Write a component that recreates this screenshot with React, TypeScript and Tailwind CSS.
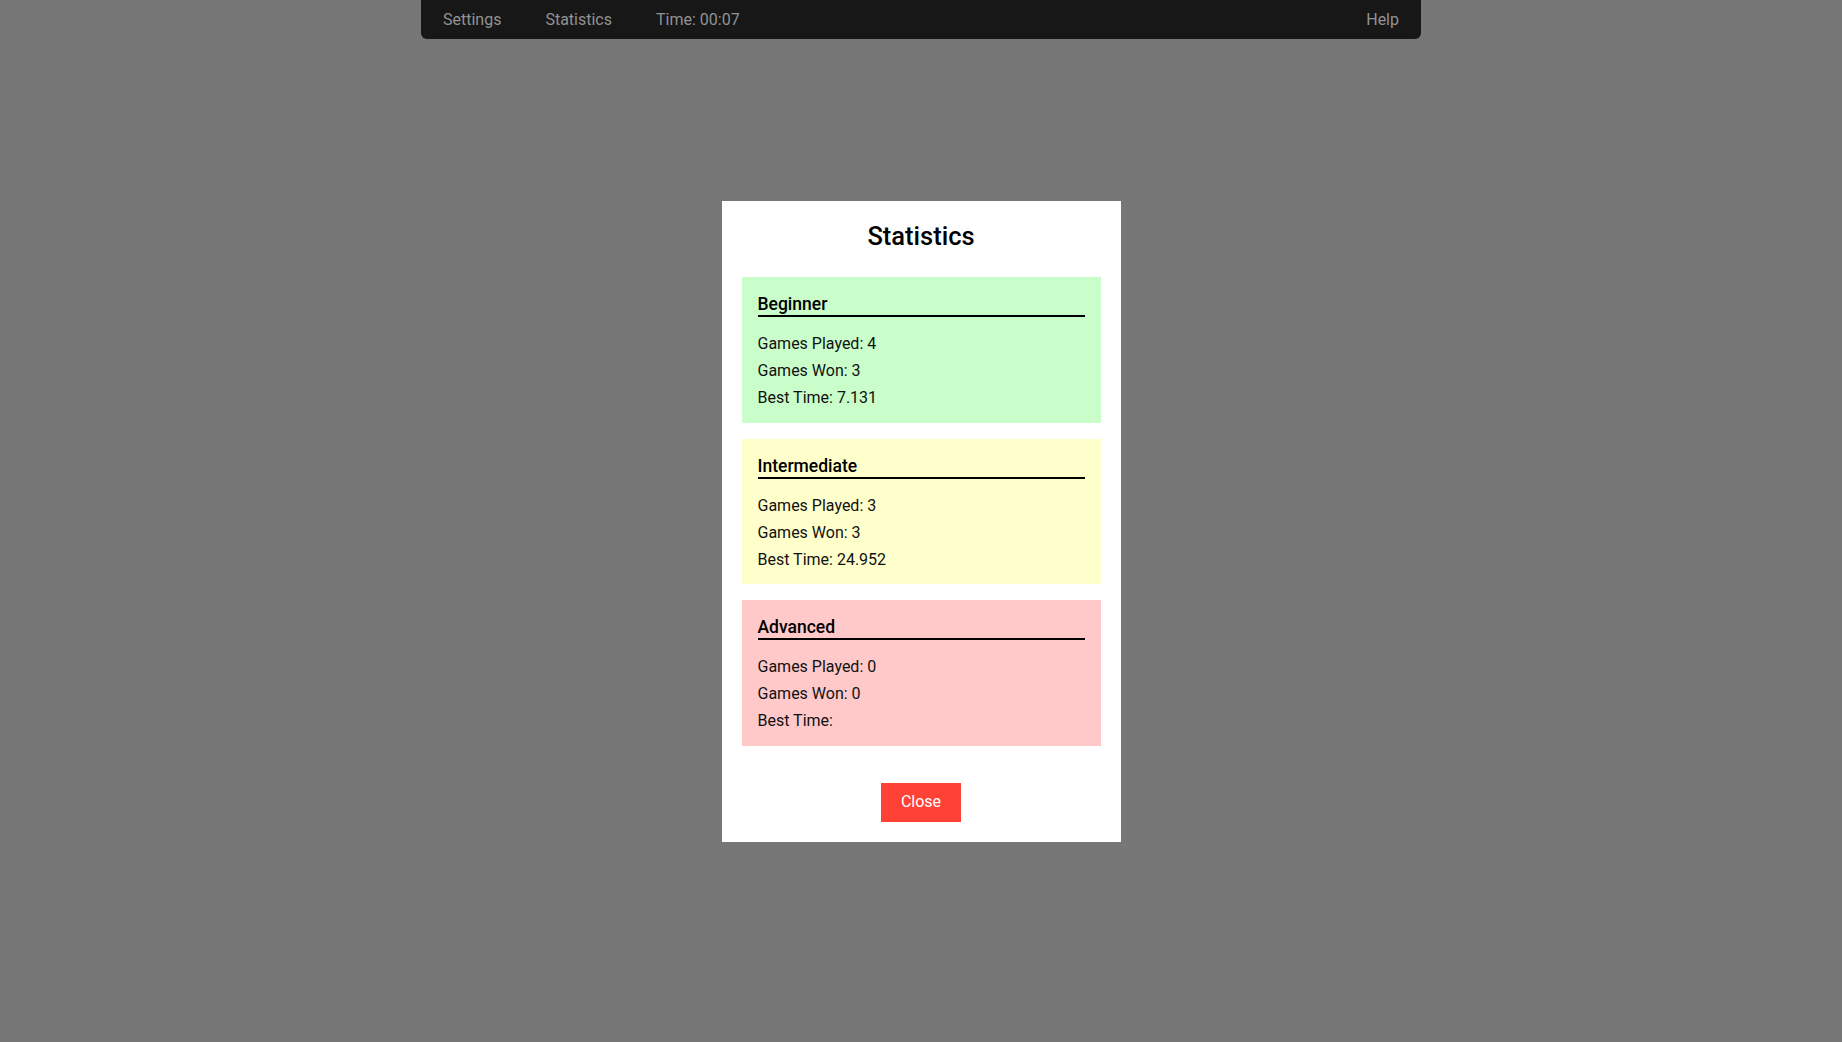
import React from "react";

type LevelStats = {
  name: string;
  played: number;
  won: number;
  best: string;
  bg: string;
};

const levels: LevelStats[] = [
  { name: "Beginner", played: 4, won: 3, best: "7.131", bg: "bg-[#c9fdc9]" },
  { name: "Intermediate", played: 3, won: 3, best: "24.952", bg: "bg-[#ffffcb]" },
  { name: "Advanced", played: 0, won: 0, best: "", bg: "bg-[#ffc9c9]" },
];

export default function App() {
  return (
    <div className="min-h-screen bg-[#777777] font-['Roboto',sans-serif] relative">
      {/* top nav */}
      <nav className="mx-auto w-[1000px] h-[39px] pt-[1px] bg-[#171717] rounded-b-[6px] flex items-center text-[16px] text-[#929292]">
        <span className="px-[22px]">Settings</span>
        <span className="px-[22px]">Statistics</span>
        <span className="px-[22px]">Time: 00:07</span>
        <span className="ml-auto px-[22px]">Help</span>
      </nav>

      {/* statistics modal */}
      <div className="flex justify-center pt-[162px]">
        <div className="w-[399px] bg-white px-5 pt-[19px] pb-5 flex flex-col">
          <h2 className="text-center text-[25.5px] leading-[32px] font-medium text-black">
            Statistics
          </h2>
          <div className="mt-[25px] flex flex-col gap-4">
            {levels.map((lvl) => (
              <div key={lvl.name} className={`${lvl.bg} px-4 pt-4 pb-[11.6px]`}>
                <h3 className="text-[17.5px] leading-[22px] font-medium text-black border-b-2 border-black">
                  {lvl.name}
                </h3>
                <div className="mt-[13px] text-[16px] leading-[27px] text-[#111111]">
                  <p>Games Played: {lvl.played}</p>
                  <p>Games Won: {lvl.won}</p>
                  <p>Best Time: {lvl.best}</p>
                </div>
              </div>
            ))}
          </div>
          <div className="flex justify-center mt-[37px]">
            <button className="w-[80px] h-[39px] bg-[#ff4136] text-white text-[16px]">
              Close
            </button>
          </div>
        </div>
      </div>
    </div>
  );
}
